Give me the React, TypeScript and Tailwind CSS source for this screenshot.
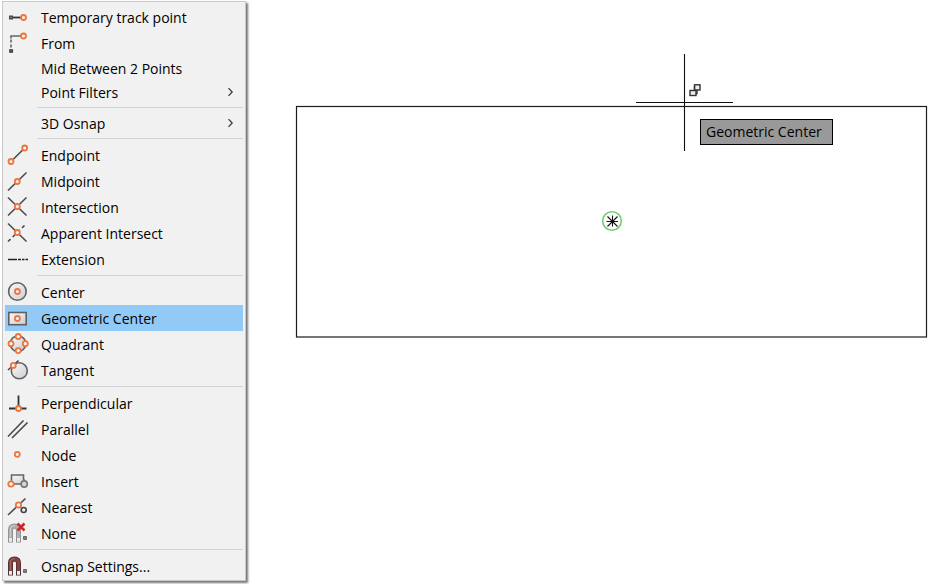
import type { ReactNode } from "react";

interface MenuEntry {
  label: string;
  icon?: ReactNode;
  submenu?: boolean;
  active?: boolean;
}

const Dot = ({ x, y, r = 2.5 }: { x: number; y: number; r?: number }) => (
  <circle cx={x} cy={y} r={r} fill="#fff4ee" stroke="#ec7541" strokeWidth="1.8" />
);

const Icon = ({ children }: { children?: ReactNode }) => (
  <svg
    viewBox="0 0 26 26"
    className="size-[26px] shrink-0"
    fill="none"
    stroke="#4a4a4a"
    strokeWidth="1.6"
    aria-hidden="true"
  >
    {children}
  </svg>
);

const Shade = ({ id }: { id: string }) => (
  <defs>
    <linearGradient id={id} x1="0" y1="0" x2="1" y2="1">
      <stop offset="0" stopColor="#fafafa" />
      <stop offset="1" stopColor="#c9ccd2" />
    </linearGradient>
  </defs>
);

const Magnet = ({ body, edge, shine }: { body: string; edge: string; shine: string }) => (
  <>
    <path d="M5.5 22.5V10C5.5 7 7 6 9.5 6S13.5 7 13.5 10V22.5" stroke={edge} strokeWidth="5" />
    <path d="M5.5 18V10C5.5 7 7 6 9.5 6S13.5 7 13.5 10V18" stroke={body} strokeWidth="3.2" />
    <path d="M5.3 17V10C5.3 7 7 5.6 9.5 5.6" stroke={shine} strokeWidth="1" />
    <path d="M4 18H7V21.7H4ZM12 18H15V21.7H12Z" fill="#ebebeb" stroke="none" />
    <rect x="18.8" y="16.8" width="2.4" height="2.4" fill="#ddd" strokeWidth="1.2" />
  </>
);

const groups: MenuEntry[][] = [
  [
    {
      label: "Temporary track point",
      icon: (
        <>
          <path d="M7 13.5H16" stroke="#333" strokeWidth="1.8" />
          <rect x="4.7" y="12.2" width="2.6" height="2.6" fill="#999" strokeWidth="1.4" />
          <Dot x={18.5} y={13.5} />
        </>
      ),
    },
    {
      label: "From",
      icon: (
        <>
          <path d="M6 8.5V6H16" stroke="#666" />
          <path d="M6 9.5V19" strokeDasharray="3 2" stroke="#666" />
          <rect x="4.8" y="19.8" width="2.6" height="2.4" fill="#555" strokeWidth="1.3" />
          <Dot x={18.5} y={6} />
        </>
      ),
    },
    { label: "Mid Between 2 Points" },
    { label: "Point Filters", submenu: true },
  ],
  [{ label: "3D Osnap", submenu: true }],
  [
    {
      label: "Endpoint",
      icon: (
        <>
          <path d="M6 19.5L19.7 6" />
          <Dot x={19.7} y={6} />
          <Dot x={6} y={19.5} />
        </>
      ),
    },
    {
      label: "Midpoint",
      icon: (
        <>
          <path d="M3 22.5L21.5 4.5" />
          <Dot x={12.3} y={13.5} />
        </>
      ),
    },
    {
      label: "Intersection",
      icon: (
        <>
          <path d="M3 3.5L21.5 21.5M3 21.5L21.5 3.5" />
          <Dot x={12.3} y={12.5} />
        </>
      ),
    },
    {
      label: "Apparent Intersect",
      icon: (
        <>
          <path d="M3 3.5L21.5 21.5" />
          <path d="M3 21.5L21.5 3.5" strokeDasharray="3.5 3" />
          <Dot x={12.3} y={12.5} />
        </>
      ),
    },
    {
      label: "Extension",
      icon: <path d="M3 13.5H12M13 13.5H16M17 13.5H19.5M20.5 13.5H23" strokeWidth="1.6" stroke="#222" />,
    },
  ],
  [
    {
      label: "Center",
      icon: (
        <>
          <Shade id="center-fill" />
          <circle cx="12.4" cy="12.5" r="8.8" fill="url(#center-fill)" stroke="#606060" />
          <Dot x={12.4} y={12.5} />
        </>
      ),
    },
    {
      label: "Geometric Center",
      active: true,
      icon: (
        <>
          <Shade id="geo-fill" />
          <rect x="3.8" y="7.5" width="17.4" height="12.2" fill="url(#geo-fill)" stroke="#606060" />
          <Dot x={12.4} y={13.5} />
        </>
      ),
    },
    {
      label: "Quadrant",
      icon: (
        <>
          <Shade id="quad-fill" />
          <circle cx="13" cy="12.7" r="7.8" fill="url(#quad-fill)" stroke="#606060" />
          <Dot x={13.2} y={5.5} />
          <Dot x={13.2} y={19.6} />
          <Dot x={6} y={12.7} />
          <Dot x={20.3} y={12.7} />
        </>
      ),
    },
    {
      label: "Tangent",
      icon: (
        <>
          <Shade id="tan-fill" />
          <circle cx="14.3" cy="13.8" r="8" fill="url(#tan-fill)" stroke="#606060" />
          <path d="M3 13L13.5 3.5" />
          <Dot x={8.3} y={8.4} />
        </>
      ),
    },
  ],
  [
    {
      label: "Perpendicular",
      icon: (
        <>
          <path d="M13.5 5.5V17M4 18.5H21.5" stroke="#333" strokeWidth="1.8" />
          <Dot x={13.5} y={18.5} />
        </>
      ),
    },
    { label: "Parallel", icon: <path d="M3 20.5L18.5 4.5M7 22L22.5 6.5" /> },
    { label: "Node", icon: <Dot x={12.3} y={12.3} /> },
    {
      label: "Insert",
      icon: (
        <>
          <Shade id="insert-fill" />
          <path d="M6.5 15.5V7H18.5V11L21.5 16H6" fill="url(#insert-fill)" stroke="#666" />
          <circle cx="19.2" cy="16" r="3.1" fill="#d5d7da" stroke="#777" />
          <Dot x={6} y={16} r={2.7} />
        </>
      ),
    },
    {
      label: "Nearest",
      icon: (
        <>
          <path d="M3 21L20.5 4.5" />
          <circle cx="18.7" cy="16" r="2.5" fill="#eee" stroke="#444" />
          <Dot x={13.5} y={11} r={2.7} />
        </>
      ),
    },
    {
      label: "None",
      icon: (
        <>
          <Magnet body="#b0b0b0" edge="#909090" shine="#d0d0d0" />
          <path d="M12.5 3.5L19.5 10.5M19.5 3.5L12.5 10.5" stroke="#d02623" strokeWidth="2.6" />
        </>
      ),
    },
  ],
  [{ label: "Osnap Settings...", icon: <Magnet body="#8b3f3f" edge="#4a3434" shine="#b06a6a" /> }],
];

const MenuItem = ({ label, icon, submenu, active }: MenuEntry) => (
  <li role="none">
    <button
      type="button"
      role="menuitem"
      aria-haspopup={submenu ? "menu" : undefined}
      className={`flex w-full items-center text-left ${
        icon || active ? "h-[26px]" : "h-6"
      } ${active ? "bg-[#91c9f7]" : "hover:bg-[#91c9f7]"}`}
    >
      {icon ? <Icon>{icon}</Icon> : <span className="w-[26px] shrink-0" />}
      <span className="ml-[10px] flex-1 pt-[2px] whitespace-nowrap">{label}</span>
      {submenu && (
        <svg viewBox="0 0 8 10" className="mr-2 h-[10px] w-2" fill="none" stroke="#333" strokeWidth="1.2" aria-hidden="true">
          <path d="M1.5 1.2L5.2 5L1.5 8.8" />
        </svg>
      )}
    </button>
  </li>
);

const OsnapMenu = () => (
  <nav className="mt-px ml-[2px] w-61 shrink-0 self-start border border-[#c8c8c8] bg-[#f1f1f1] p-[2px] pb-px shadow-[2px_2px_2px_#777]">
    <ul role="menu" aria-label="Object snap">
      {groups.map((group, i) => (
        <li key={group[0].label} role="none">
          {i > 0 && (
            <div role="separator" className="flex h-[7px] items-center pl-8">
              <div className="h-px w-full bg-[#d2d2d2]" />
            </div>
          )}
          <ul role="group">
            {group.map((entry) => (
              <MenuItem key={entry.label} {...entry} />
            ))}
          </ul>
        </li>
      ))}
    </ul>
  </nav>
);

const DrawingCanvas = () => (
  <main className="relative flex-1 overflow-hidden">
    <svg className="absolute inset-0 h-full w-full" fill="none" stroke="#1c1c1c" aria-hidden="true">
      <rect x="50.5" y="106.5" width="630" height="230.5" strokeWidth="1.2" />
      <path d="M438.5 54V151M390 102.5H487" stroke="#111" strokeWidth="1.1" />
      {/* snap badge beside the crosshair */}
      <g strokeWidth="1.4" fill="#eee" stroke="#333">
        <rect x="444" y="90.5" width="6" height="5" />
        <rect x="448.5" y="84.8" width="5.5" height="5.2" />
        <path d="M448.5 86V91M451 90V93.5H450" fill="none" />
      </g>
      <circle cx="366" cy="221" r="9.3" stroke="#72ce75" strokeWidth="1.6" />
      <path d="M366.5 215.5V226.5M360.5 221.5H372M361.5 216.5L371.5 226.5M371.5 216.5L361.5 226.5" stroke="#111" strokeWidth="1.1" />
    </svg>
    <div
      role="tooltip"
      className="absolute top-[119px] left-[454px] flex h-[26px] w-[133px] items-center border border-black bg-[#999999] pl-[5px] whitespace-nowrap"
    >
      Geometric Center
    </div>
  </main>
);

const App = () => {
  return (
    <div className="flex min-h-screen bg-white font-['Open_Sans','Noto_Sans',sans-serif] text-[14px] leading-5 text-black">
      <OsnapMenu />
      <DrawingCanvas />
    </div>
  );
};

export default App;
